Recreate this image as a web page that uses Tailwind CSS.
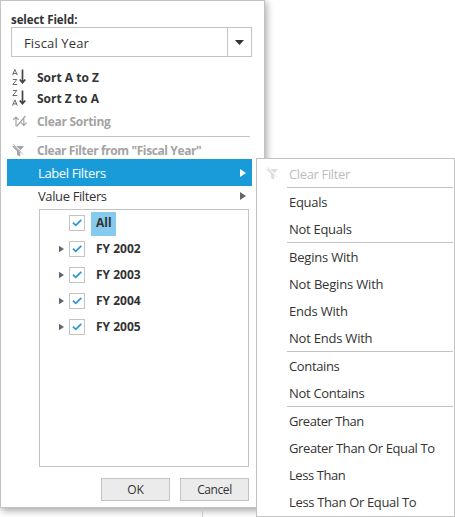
<!DOCTYPE html>
<html lang="en">
<head>
<meta charset="utf-8">
<title>Field filter</title>
<script src="https://cdn.jsdelivr.net/npm/@tailwindcss/browser@4"></script>
</head>
<body class="relative h-[517px] w-[455px] overflow-hidden bg-white font-['Open_Sans','Noto_Sans',sans-serif] text-[13px] leading-[20px] text-[#333]">
<svg class="hidden">
  <symbol id="check" viewBox="0 0 14 14"><path d="M3 6.7l2.7 2.6L11.3 3.9" fill="none" stroke="#2a98d8" stroke-width="1.8"/></symbol>
  <symbol id="arrow" viewBox="0 0 6 8"><path d="M0 0l6 4-6 4z" fill="currentColor"/></symbol>
  <symbol id="funnel" viewBox="0 0 13 13"><path d="M0 2h2.2l6 6v4.5L5 11V7.2zM4.3 2H12L8.6 6.2z" fill="currentColor"/><path d="M1 0l10 10.5" stroke="currentColor" stroke-width=".8"/></symbol>
</svg>
<div class="absolute left-[202px] top-[508px] h-[9px] w-px bg-[#c8c8c8]"></div>

<main class="flex h-[508px] w-[265px] flex-col border border-[#c3c3c3] bg-white shadow-[1px_2px_8px_rgba(0,0,0,0.4)]">
  <label class="ml-[10px] mt-[9px] h-[17px] text-[11.5px] leading-[20px] font-bold tracking-[-0.08px]">select Field:</label>
  <div class="ml-[10px] flex h-[30px] w-[241px] shrink-0 border border-[#c3c3c3]">
    <div class="w-[216px] border-r border-[#c3c3c3] pl-[12px] leading-[31px] tracking-[0.15px]">Fiscal Year</div>
    <div class="flex flex-1 items-center justify-center"><svg width="9" height="5" viewBox="0 0 9 5"><path d="M0 0h9L4.5 5z" fill="#333"/></svg></div>
  </div>
  <div class="mt-[9px] flex h-[21px] items-center pl-[11px] text-[12px] font-bold">
    <svg class="mr-[9px] shrink-0" width="16" height="18" viewBox="0 0 16 18" fill="none" stroke="#444"><path d="M.5 7.2L2.9 1.5l2.4 5.7M1.2 5.5h3.3M.8 11.5h4L.8 16.5h4.4" stroke-width=".8"/><path d="M10.5 1.5v12.5M7.7 11.5l2.8 3.2 2.8-3.2" stroke-width="1.7"/></svg>
    <span class="pt-[2px]">Sort A to Z</span>
  </div>
  <div class="flex h-[21px] items-center pl-[11px] text-[12px] font-bold">
    <svg class="mr-[9px] shrink-0" width="16" height="18" viewBox="0 0 16 18" fill="none" stroke="#444"><path d="M.8 1.5h4L.8 6.5h4.4M.5 16.6l2.4-5.7 2.4 5.7M1.2 14.9h3.3" stroke-width=".8"/><path d="M10.5 1.5v12.5M7.7 11.5l2.8 3.2 2.8-3.2" stroke-width="1.7"/></svg>
    <span class="pt-[2px]">Sort Z to A</span>
  </div>
  <div class="flex h-[26px] items-center pl-[11px] text-[12px] font-bold text-[#a3a3a3]">
    <svg class="mr-[9px] shrink-0" width="16" height="14" viewBox="0 0 16 14" fill="none" stroke="#a3a3a3"><path d="M4 12V3.5M1.2 5.8L4 3l2.8 2.8M11.8 3v8M9 8.7l2.8 2.8 2.8-2.8M4.5 12.5L13.5 2" stroke-width="1.2"/></svg>
    <span class="pt-[2px] tracking-[-0.28px]">Clear Sorting</span>
  </div>
  <div class="ml-[36px] mt-[2px] h-px w-[213px] shrink-0 bg-[#c3c3c3]"></div>
  <div class="flex h-[22px] items-center whitespace-nowrap pl-[11px] pt-[4px] text-[12px] font-bold tracking-[-0.39px] text-[#a3a3a3]">
    <svg class="mr-[12px] shrink-0" width="13" height="13"><use href="#funnel"/></svg>
    <span class="pt-[1px]">Clear Filter from "Fiscal Year"</span>
  </div>
  <div class="ml-[6px] flex h-[27px] w-[245px] shrink-0 items-center justify-between bg-[#189bd8] pl-[31px] pr-[6px] pt-[1px] tracking-[-0.38px] text-white">
    Label Filters
    <svg class="-mt-[1px]" width="6" height="8"><use href="#arrow"/></svg>
  </div>
  <div class="ml-[6px] flex h-[20px] w-[245px] shrink-0 items-center justify-between pl-[31px] pr-[6px] tracking-[-0.38px]">
    Value Filters
    <svg class="text-[#666]" width="6" height="8"><use href="#arrow"/></svg>
  </div>
  <div class="ml-[38px] mt-[3px] flex h-[258px] w-[210px] shrink-0 flex-col border border-[#c3c3c3] pt-[2px] text-[12px] leading-[22px] font-bold">
    <div class="flex h-[26px] items-start">
      <span class="ml-[29px] mt-[3px] h-4 w-4 border border-[#c3c3c3]"><svg class="h-[14px] w-[14px]"><use href="#check"/></svg></span>
      <span class="ml-[6px] h-[24px] w-[25px] bg-[#85cbee] pl-[5px]">All</span>
    </div>
    <div class="flex h-[26px] items-start">
      <svg class="ml-[19px] mt-[7px] text-[#5b6670]" width="5" height="8"><use href="#arrow"/></svg>
      <span class="ml-[5px] mt-[3px] h-4 w-4 border border-[#c3c3c3]"><svg class="h-[14px] w-[14px]"><use href="#check"/></svg></span>
      <span class="ml-[11px]">FY 2002</span>
    </div>
    <div class="flex h-[26px] items-start">
      <svg class="ml-[19px] mt-[7px] text-[#5b6670]" width="5" height="8"><use href="#arrow"/></svg>
      <span class="ml-[5px] mt-[3px] h-4 w-4 border border-[#c3c3c3]"><svg class="h-[14px] w-[14px]"><use href="#check"/></svg></span>
      <span class="ml-[11px]">FY 2003</span>
    </div>
    <div class="flex h-[26px] items-start">
      <svg class="ml-[19px] mt-[7px] text-[#5b6670]" width="5" height="8"><use href="#arrow"/></svg>
      <span class="ml-[5px] mt-[3px] h-4 w-4 border border-[#c3c3c3]"><svg class="h-[14px] w-[14px]"><use href="#check"/></svg></span>
      <span class="ml-[11px]">FY 2004</span>
    </div>
    <div class="flex h-[26px] items-start">
      <svg class="ml-[19px] mt-[7px] text-[#5b6670]" width="5" height="8"><use href="#arrow"/></svg>
      <span class="ml-[5px] mt-[3px] h-4 w-4 border border-[#c3c3c3]"><svg class="h-[14px] w-[14px]"><use href="#check"/></svg></span>
      <span class="ml-[11px]">FY 2005</span>
    </div>
  </div>
  <div class="ml-[100px] mt-[11px] flex gap-[10px] text-[12px]">
    <button class="flex h-[23px] w-[69px] justify-center border border-[#c3c3c3] bg-[#ebebeb] leading-[21px]">OK</button>
    <button class="flex h-[23px] w-[69px] justify-center border border-[#c3c3c3] bg-[#ebebeb] leading-[21px] tracking-[-0.4px]">Cancel</button>
  </div>
</main>

<nav class="absolute left-[256px] top-[158px] flex h-[359px] w-[199px] flex-col border border-[#c3c3c3] bg-white pt-[1px] leading-[28px] [&>p]:h-[27px] [&>p]:pl-[32px] [&>hr]:ml-[30px] [&>hr]:mr-[1px] [&>hr]:border-[#c3c3c3]">
  <div class="flex h-[27px] items-center pl-[9px] tracking-[-0.35px] text-[#bdbdbd]"><svg class="mr-[10px] text-[#dedede]" width="13" height="13"><use href="#funnel"/></svg>Clear Filter</div>
  <hr>
  <p class="tracking-[-0.3px]">Equals</p>
  <p class="tracking-[-0.28px]">Not Equals</p>
  <hr>
  <p class="tracking-[-0.2px]">Begins With</p>
  <p class="tracking-[-0.18px]">Not Begins With</p>
  <p class="tracking-[-0.2px]">Ends With</p>
  <p class="tracking-[-0.22px]">Not Ends With</p>
  <hr>
  <p class="tracking-[-0.36px]">Contains</p>
  <p class="tracking-[-0.3px]">Not Contains</p>
  <hr>
  <p class="tracking-[-0.45px]">Greater Than</p>
  <p class="tracking-[-0.36px]">Greater Than Or Equal To</p>
  <p class="tracking-[-0.42px]">Less Than</p>
  <p class="tracking-[-0.34px]">Less Than Or Equal To</p>
</nav>
</body>
</html>
